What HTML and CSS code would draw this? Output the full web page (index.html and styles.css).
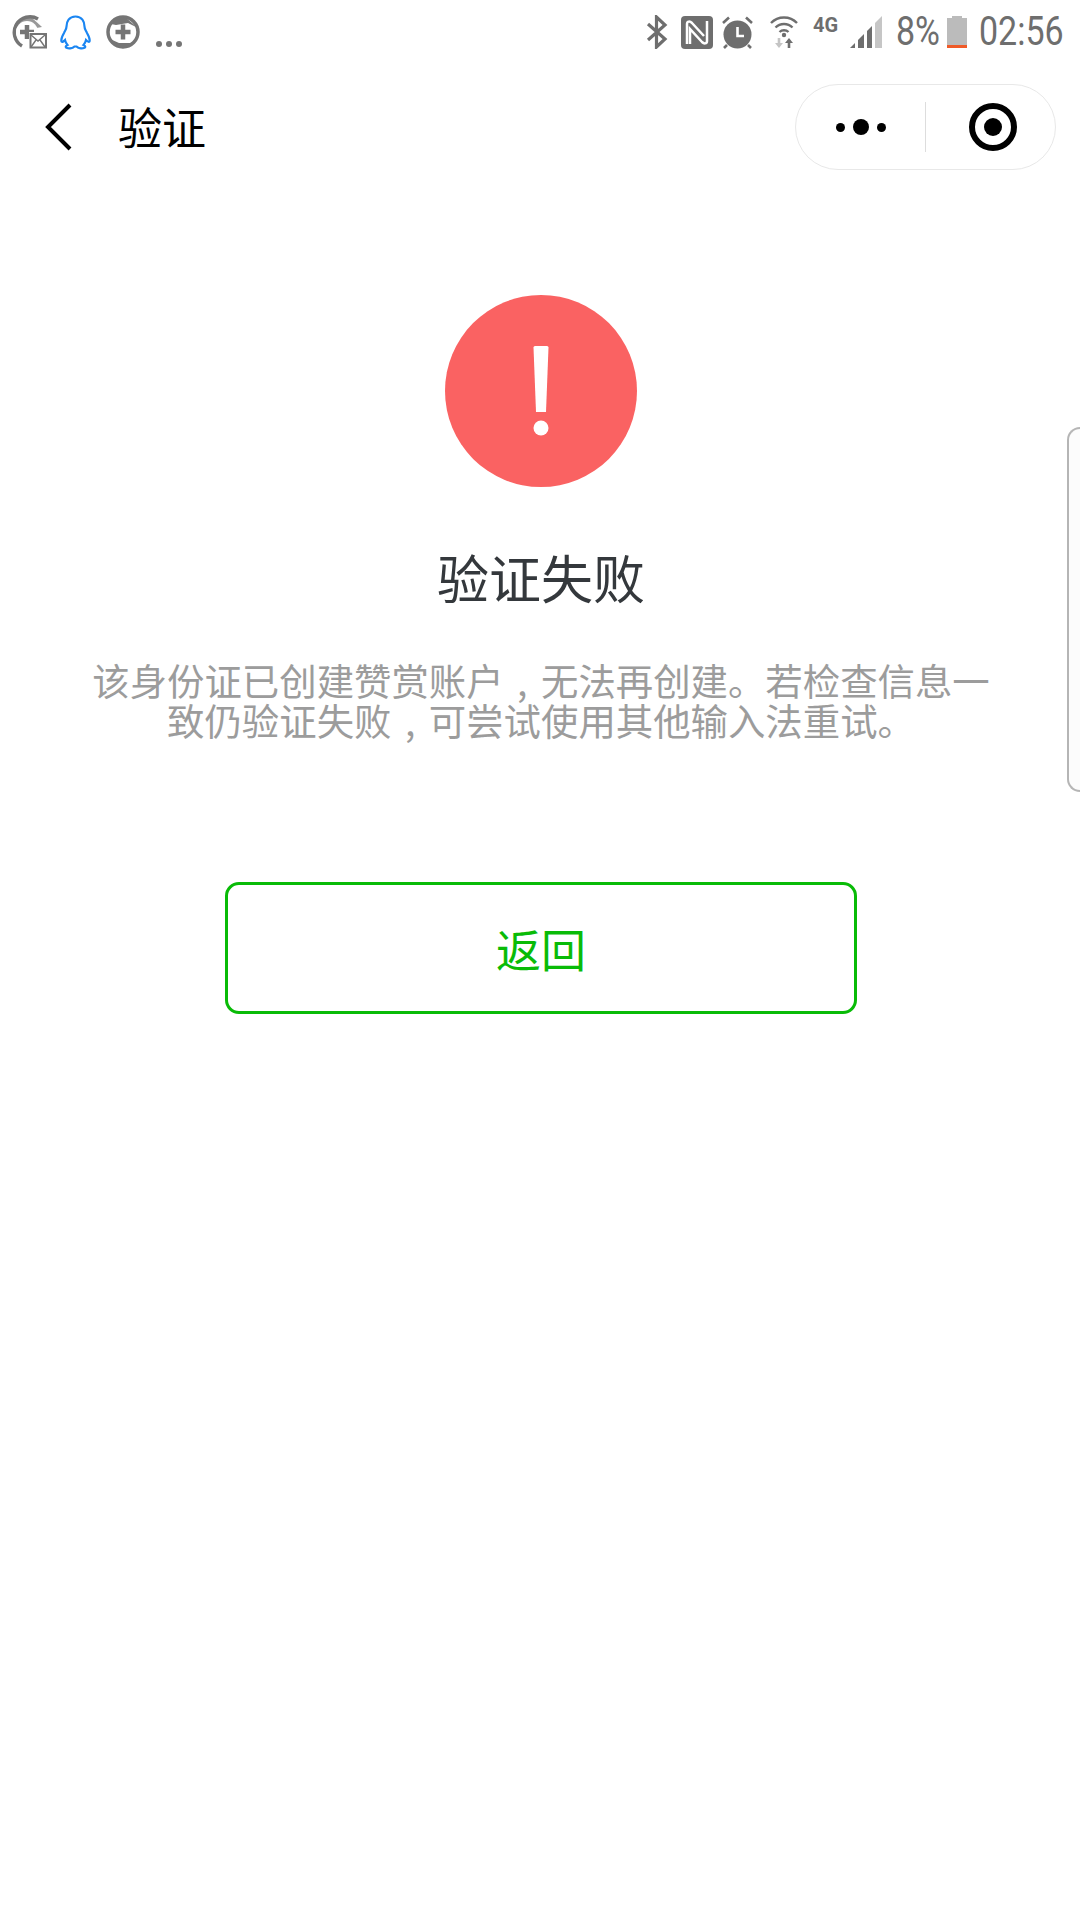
FILE: index.html
```html
<!DOCTYPE html>
<html>
<head>
    <title>验证</title>
    <link rel="stylesheet" href="styles.css">
</head>
<body>
    <div class="status-bar">
        <div class="status-left">
            <svg class="icon-add-mail" width="36" height="34" viewBox="0 0 36 34">
                <path d="M11 31 A15 15 0 0 1 27 4" fill="none" stroke="#757575" stroke-width="3.5"/>
                <path d="M3 11 A15 15 0 0 1 20 2 L31 12 L20 14 L12 14 Z" fill="#757575" opacity="0.75"/>
                <circle cx="16" cy="17" r="11" fill="#fff"/>
                <path d="M16 10 V24 M9 17 H23" stroke="#757575" stroke-width="4.5"/>
                <rect x="18" y="17" width="18" height="17" fill="#fff"/>
                <rect x="19.5" y="19" width="15.5" height="13.5" fill="none" stroke="#757575" stroke-width="2"/>
                <path d="M20 20 L27 26 L34 20 M20 32 L25 25 M34 32 L29 25" fill="none" stroke="#757575" stroke-width="1.4"/>
            </svg>
            <svg class="icon-qq" width="31" height="35" viewBox="0 0 31 35">
                <path d="M15.5 1.5 C9 1.5 6.5 6.5 6.5 11.5 C6.5 14 5.5 15 4 18 C2 21.5 1 25 1.5 26.5 C2.5 27.5 4 26 5 25 C5.5 27 6 28.5 7.5 30 C5.5 31 5 32.5 7 33 C9.5 33.8 13 33 14.5 31.5 L16.5 31.5 C18 33 21.5 33.8 24 33 C26 32.5 25.5 31 23.5 30 C25 28.5 25.5 27 26 25 C27 26 28.5 27.5 29.5 26.5 C30 25 29 21.5 27 18 C25.5 15 24.5 14 24.5 11.5 C24.5 6.5 22 1.5 15.5 1.5 Z" fill="#fff" stroke="#1b86f2" stroke-width="2.2"/>
            </svg>
            <svg class="icon-add" width="34" height="34" viewBox="0 0 34 34">
                <circle cx="17" cy="17" r="15" fill="none" stroke="#757575" stroke-width="3.5"/>
                <path d="M5 9 A15 15 0 0 1 19 2 L32 13 L22 8 L10 10 Z M29 26 A15 15 0 0 1 13 32 L4 24 L13 28 L24 28 Z" fill="#757575"/>
                <path d="M17 9.5 V24.5 M9.5 17 H24.5" stroke="#757575" stroke-width="4.5"/>
            </svg>
            <div class="more-dots"><span></span><span></span><span></span></div>
        </div>
        <div class="status-right">
            <svg class="icon-bt" width="22" height="34" viewBox="0 0 22 34">
                <path d="M2 9 L19 24 L10.5 32 V2 L19 10 L2 25" fill="none" stroke="#6e6e6e" stroke-width="3.2"/>
            </svg>
            <svg class="icon-nfc" width="32" height="33" viewBox="0 0 32 33">
                <rect width="32" height="33" rx="4" fill="#6e6e6e"/>
                <path d="M6 28 V8 C6 5 9 5 11 7 L23 20" fill="none" stroke="#fff" stroke-width="2.5"/>
                <path d="M26 5 V25 C26 28 23 28 21 26 L9 13 V28" fill="none" stroke="#fff" stroke-width="2.5"/>
            </svg>
            <svg class="icon-alarm" width="31" height="33" viewBox="0 0 31 33">
                <circle cx="15.5" cy="18.5" r="14" fill="#6e6e6e"/>
                <path d="M1 7 L7 1.5 M30 7 L24 1.5 M5 29 L2 32 M26 29 L29 32" stroke="#6e6e6e" stroke-width="2.6"/>
                <path d="M15.5 11 V20 H22" fill="none" stroke="#fff" stroke-width="2.6"/>
            </svg>
            <svg class="icon-wifi" width="28" height="33" viewBox="0 0 28 33">
                <path d="M1 7 A18 18 0 0 1 27 7 M5.5 11.5 A12 12 0 0 1 22.5 11.5 M9.5 16 A6.5 6.5 0 0 1 18.5 16" fill="none" stroke="#6e6e6e" stroke-width="2.4"/>
                <circle cx="14" cy="19" r="2.2" fill="#6e6e6e"/>
                <path d="M9 22 V28" stroke="#c4c4c4" stroke-width="2.6"/>
                <path d="M5 27 H13 L9 32 Z" fill="#c4c4c4"/>
                <path d="M19 26 V32" stroke="#6e6e6e" stroke-width="2.6"/>
                <path d="M15 27 H23 L19 22 Z" fill="#6e6e6e"/>
            </svg>
            <span class="net-type">4G</span>
            <svg class="icon-signal" width="32" height="33" viewBox="0 0 32 33">
                <path d="M0 32 L5 27 V32 Z" fill="#6e6e6e"/>
                <path d="M8 24 L14 18 V32 H8 Z" fill="#6e6e6e"/>
                <path d="M17 15 L22 10 V32 H17 Z" fill="#6e6e6e"/>
                <path d="M25 7 L32 0 V32 H25 Z" fill="#c6c6c6"/>
            </svg>
            <span class="status-text battery-text">8%</span>
            <div class="battery"><div class="battery-cap"></div><div class="battery-body"></div></div>
            <span class="status-text clock">02:56</span>
        </div>
    </div>

    <div class="nav-bar">
        <div class="nav-left">
            <svg class="nav-back" width="28" height="48" viewBox="0 0 28 48">
                <path d="M25 2 L3 24 L25 46" fill="none" stroke="#000" stroke-width="4"/>
            </svg>
            <span class="nav-title">验证</span>
        </div>
        <div class="capsule">
            <div class="capsule-part capsule-left">
                <div class="capsule-dots"><span></span><span class="big"></span><span></span></div>
            </div>
            <div class="capsule-line"></div>
            <div class="capsule-part capsule-right">
                <div class="capsule-target"><span></span></div>
            </div>
        </div>
    </div>

    <div class="side-handle"></div>

    <div class="content">
        <div class="warn-circle">
            <svg width="16" height="90" viewBox="0 0 16 90">
                <path d="M0.5 1.5 Q0.5 0 2 0 H14 Q15.5 0 15.5 1.5 L13 66 H3 Z" fill="#fff"/>
                <circle cx="8" cy="82" r="7.5" fill="#fff"/>
            </svg>
        </div>
        <h1 class="result-title">验证失败</h1>
        <p class="result-desc">该身份证已创建赞赏账户<span class="mid-comma">,</span>无法再创建。若检查信息一致仍验证失败<span class="mid-comma">,</span>可尝试使用其他输入法重试。</p>
        <a class="back-button">返回</a>
    </div>
</body>
</html>
```

FILE: styles.css
```css
body {
    margin: 0;
    background-color: #fff;
    font-family: "Noto Sans CJK SC", "Roboto", sans-serif;
    height: 1920px;
    overflow: hidden;
    position: relative;
}

.status-bar {
    display: flex;
    justify-content: space-between;
    align-items: center;
    height: 64px;
    padding: 0 17px 0 11px;
}
.status-left, .status-right {
    display: flex;
    align-items: center;
}
.icon-qq {
    margin-left: 13px;
}
.icon-add {
    margin-left: 15px;
}
.more-dots {
    display: flex;
    gap: 4px;
    margin: 24px 0 0 16px;
}
.more-dots span {
    width: 6px;
    height: 6px;
    border-radius: 50%;
    background-color: #757575;
}
.icon-nfc {
    margin-left: 13px;
}
.icon-alarm {
    margin-left: 9px;
}
.icon-wifi {
    margin-left: 17px;
}
.net-type {
    font-family: "Roboto", sans-serif;
    font-weight: bold;
    font-size: 20px;
    color: #6e6e6e;
    margin: -14px 0 0 15px;
    width: 26px;
}
.icon-signal {
    margin-left: 11px;
}
.status-text {
    font-family: "Roboto", sans-serif;
    font-size: 40px;
    color: #6e6e6e;
    line-height: 40px;
    transform-origin: left center;
    transform: scaleX(0.85);
}
.battery-text {
    margin-left: 14px;
    width: 51px;
}
.battery {
    width: 20px;
}
.battery-cap {
    width: 10px;
    height: 2px;
    margin: 0 auto;
    background-color: #bbb;
}
.battery-body {
    height: 30px;
    background-color: #bbb;
    border-bottom: 3px solid #ef5a28;
    box-sizing: border-box;
}
.clock {
    margin-left: 12px;
    width: 84px;
}

.nav-bar {
    display: flex;
    justify-content: space-between;
    align-items: center;
    height: 86px;
    margin-top: 20px;
    padding: 0 24px 0 45px;
}
.nav-left {
    display: flex;
    align-items: center;
}
.nav-title {
    font-size: 44px;
    line-height: 60px;
    color: #000;
    margin: -2px 0 0 45px;
}
.capsule {
    display: flex;
    align-items: center;
    width: 259px;
    height: 84px;
    border: 1px solid #e8e8e8;
    border-radius: 43px;
}
.capsule-part {
    display: flex;
    justify-content: center;
}
.capsule-left {
    width: 129px;
}
.capsule-right {
    flex: 1;
    padding-left: 5px;
}
.capsule-line {
    width: 1px;
    height: 50px;
    background-color: #ddd;
}
.capsule-dots {
    display: flex;
    align-items: center;
    gap: 8px;
}
.capsule-dots span {
    width: 9px;
    height: 9px;
    border-radius: 50%;
    background-color: #000;
}
.capsule-dots .big {
    width: 16px;
    height: 16px;
}
.capsule-target {
    display: flex;
    align-items: center;
    justify-content: center;
    width: 48px;
    height: 48px;
    box-sizing: border-box;
    border: 6px solid #000;
    border-radius: 50%;
}
.capsule-target span {
    width: 18px;
    height: 18px;
    border-radius: 50%;
    background-color: #000;
}

.side-handle {
    position: absolute;
    top: 427px;
    right: 0;
    width: 11px;
    height: 361px;
    border: 2px solid #b5b5b5;
    border-right: none;
    border-radius: 14px 0 0 14px;
    background-color: #fcfcfc;
}

.content {
    display: flex;
    flex-direction: column;
    align-items: center;
    padding: 125px 0 0 2px;
}
.warn-circle {
    display: flex;
    align-items: center;
    justify-content: center;
    width: 192px;
    height: 192px;
    border-radius: 50%;
    background-color: #fa6262;
}
.result-title {
    font-size: 52px;
    font-weight: normal;
    line-height: 70px;
    color: #34383c;
    margin: 55px 0 0;
}
.result-desc {
    width: 910px;
    font-size: 37.4px;
    line-height: 40px;
    color: #9c9c9c;
    text-align: center;
    margin: 48px 0 0;
}
.mid-comma {
    display: inline-block;
    width: 1em;
    text-align: center;
}
.back-button {
    display: flex;
    align-items: center;
    justify-content: center;
    width: 632px;
    height: 132px;
    box-sizing: border-box;
    border: 3px solid #09bb07;
    border-radius: 14px;
    font-size: 45px;
    color: #09bb07;
    margin-top: 142px;
}
```
